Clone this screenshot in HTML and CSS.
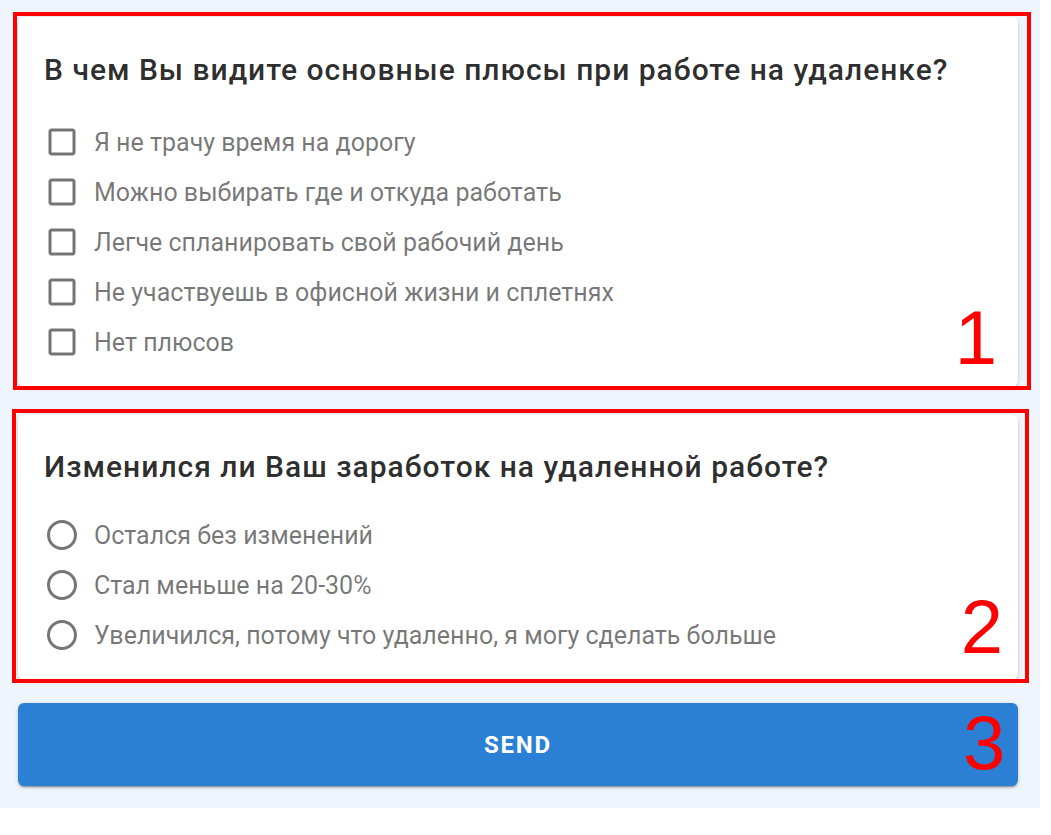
FILE: index.html
```html
<!DOCTYPE html>
<html lang="ru">
<head>
<meta charset="utf-8">
<title>Опрос</title>
<link rel="stylesheet" href="styles.css">
</head>
<body>
<div class="page">
  <form class="form">
    <section class="card card-1">
      <h2 class="question">В чем Вы видите основные плюсы при работе на удаленке?</h2>
      <ul class="options">
        <li class="option"><svg class="icon" viewBox="0 0 24 24"><path d="M19 5v14H5V5h14m0-2H5c-1.11 0-2 .9-2 2v14c0 1.1.89 2 2 2h14c1.11 0 2-.9 2-2V5c0-1.1-.89-2-2-2z"/></svg><span>Я не трачу время на дорогу</span></li>
        <li class="option"><svg class="icon" viewBox="0 0 24 24"><path d="M19 5v14H5V5h14m0-2H5c-1.11 0-2 .9-2 2v14c0 1.1.89 2 2 2h14c1.11 0 2-.9 2-2V5c0-1.1-.89-2-2-2z"/></svg><span>Можно выбирать где и откуда работать</span></li>
        <li class="option"><svg class="icon" viewBox="0 0 24 24"><path d="M19 5v14H5V5h14m0-2H5c-1.11 0-2 .9-2 2v14c0 1.1.89 2 2 2h14c1.11 0 2-.9 2-2V5c0-1.1-.89-2-2-2z"/></svg><span>Легче спланировать свой рабочий день</span></li>
        <li class="option"><svg class="icon" viewBox="0 0 24 24"><path d="M19 5v14H5V5h14m0-2H5c-1.11 0-2 .9-2 2v14c0 1.1.89 2 2 2h14c1.11 0 2-.9 2-2V5c0-1.1-.89-2-2-2z"/></svg><span>Не участвуешь в офисной жизни и сплетнях</span></li>
        <li class="option"><svg class="icon" viewBox="0 0 24 24"><path d="M19 5v14H5V5h14m0-2H5c-1.11 0-2 .9-2 2v14c0 1.1.89 2 2 2h14c1.11 0 2-.9 2-2V5c0-1.1-.89-2-2-2z"/></svg><span>Нет плюсов</span></li>
      </ul>
    </section>
    <section class="card card-2">
      <h2 class="question">Изменился ли Ваш заработок на удаленной работе?</h2>
      <ul class="options">
        <li class="option"><svg class="icon" viewBox="0 0 24 24"><path d="M12 2C6.48 2 2 6.48 2 12s4.48 10 10 10 10-4.48 10-10S17.52 2 12 2zm0 18c-4.42 0-8-3.58-8-8s3.58-8 8-8 8 3.58 8 8-3.58 8-8 8z"/></svg><span>Остался без изменений</span></li>
        <li class="option"><svg class="icon" viewBox="0 0 24 24"><path d="M12 2C6.48 2 2 6.48 2 12s4.48 10 10 10 10-4.48 10-10S17.52 2 12 2zm0 18c-4.42 0-8-3.58-8-8s3.58-8 8-8 8 3.58 8 8-3.58 8-8 8z"/></svg><span>Стал меньше на 20-30%</span></li>
        <li class="option"><svg class="icon" viewBox="0 0 24 24"><path d="M12 2C6.48 2 2 6.48 2 12s4.48 10 10 10 10-4.48 10-10S17.52 2 12 2zm0 18c-4.42 0-8-3.58-8-8s3.58-8 8-8 8 3.58 8 8-3.58 8-8 8z"/></svg><span>Увеличился, потому что удаленно, я могу сделать больше</span></li>
      </ul>
    </section>
    <button type="button" class="send">SEND</button>
  </form>
  <div class="mark mark-1"><span class="num">1</span></div>
  <div class="mark mark-2"><span class="num">2</span></div>
  <span class="num num-3">3</span>
</div>
</body>
</html>
```
FILE: styles.css
```css
* { box-sizing: border-box; }
html, body { margin: 0; padding: 0; background: #ffffff; }
body { font-family: Roboto, "Noto Sans", Arial, sans-serif; }

.page {
  position: relative;
  width: 1040px;
  background: #eef5fd;
  padding: 17px 22px 22px 18px;
}

.form {
  display: flex;
  flex-direction: column;
}

.card {
  background: #fff;
  border-radius: 6px;
  box-shadow: 0 3px 1px -2px rgba(0,0,0,.2), 0 2px 2px 0 rgba(0,0,0,.14), 0 1px 5px 0 rgba(0,0,0,.12);
  padding: 35px 26px 20px 26px;
}

.card-2 {
  margin-top: 28px;
  padding-top: 34px;
}

.question {
  margin: 0;
  font-size: 30px;
  line-height: 36px;
  font-weight: 500;
  color: rgba(0,0,0,.84);
  letter-spacing: 1px;
}

.options {
  list-style: none;
  margin: 29px 0 0 0;
  padding: 0;
}

.card-2 .options { margin-top: 25px; }

.option {
  display: flex;
  align-items: center;
  height: 50px;
  gap: 14px;
  font-size: 25px;
  color: rgba(0,0,0,.54);
}

.icon {
  width: 36px;
  height: 36px;
  flex: none;
  fill: rgba(0,0,0,.54);
}

.send {
  margin-top: 23px;
  height: 83px;
  border: none;
  border-radius: 6px;
  background: #2b80d5;
  color: #fff;
  font-family: Roboto, Arial, sans-serif;
  font-weight: 700;
  font-size: 24px;
  letter-spacing: 1.8px;
  box-shadow: 0 3px 1px -2px rgba(0,0,0,.2), 0 2px 2px 0 rgba(0,0,0,.14), 0 1px 5px 0 rgba(0,0,0,.12);
}

.mark {
  position: absolute;
  border: 4px solid #ff0000;
  display: flex;
  justify-content: flex-end;
  align-items: flex-end;
}

.mark-1 { left: 13px; top: 12px; width: 1018px; height: 378px; }
.mark-2 { left: 12px; top: 409px; width: 1017px; height: 274px; }

.num {
  font-family: "Liberation Sans", Arial, sans-serif;
  font-size: 76px;
  line-height: 1;
  color: #ff0000;
}

.mark-1 .num { margin: 0 30px 10px 0; }
.mark-2 .num { margin: 0 22px 14px 0; }

.num-3 {
  position: absolute;
  left: 963px;
  top: 705px;
}
```
